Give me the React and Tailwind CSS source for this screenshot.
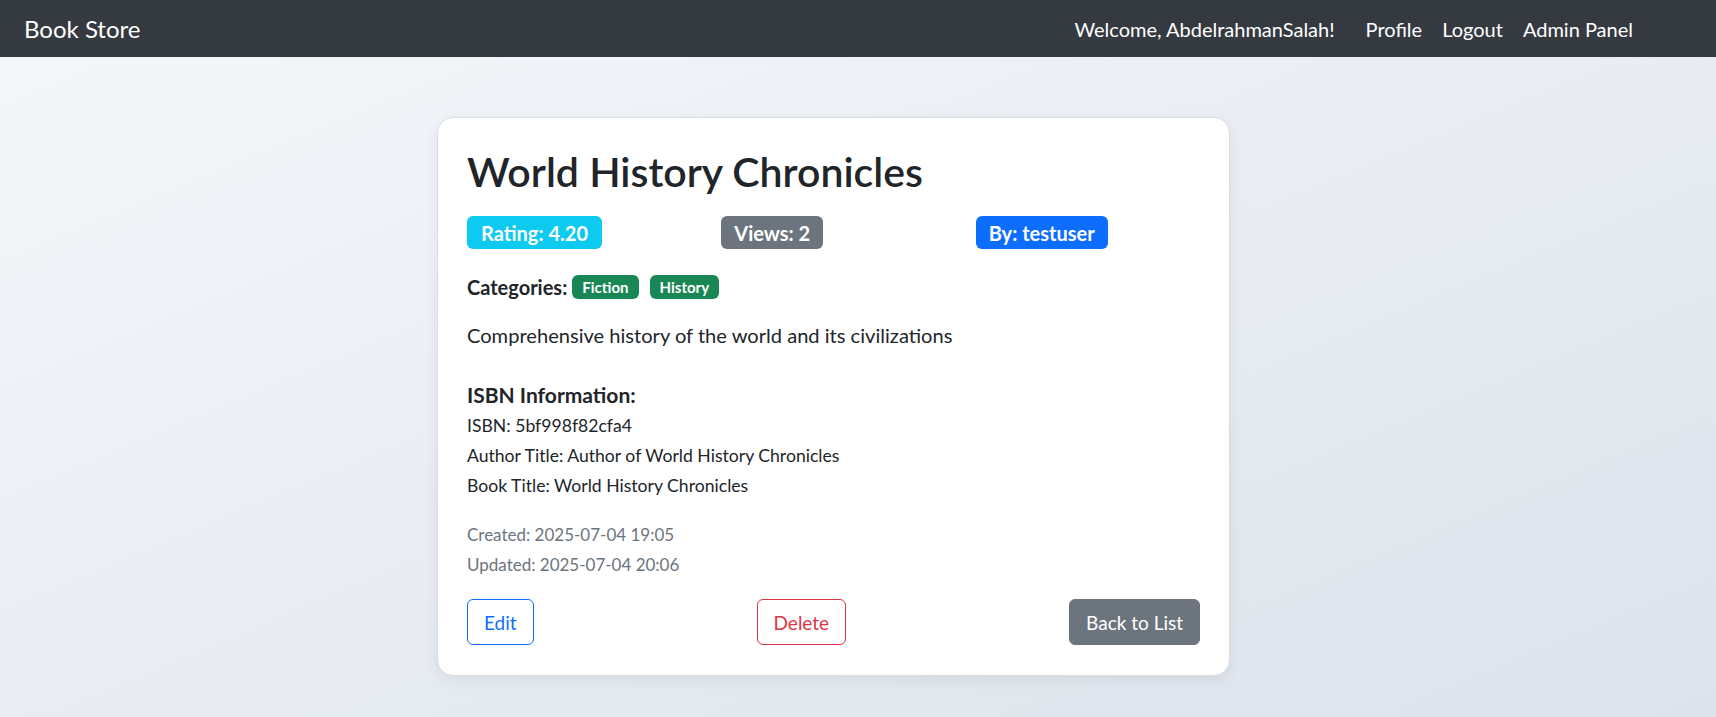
// Book detail page: top navbar + single card with book info
const font = { fontFamily: '"Segoe UI", Lato, "Noto Sans", sans-serif' };

function NavBar() {
  return (
    <nav className="h-[57px] bg-[#343a40] flex items-center pl-[24px] pr-[83px] text-white">
      <a className="text-[24px] leading-none">Book Store</a>
      <div className="ml-auto flex items-center text-[20px] leading-none">
        <span className="mr-[31px]">Welcome, AbdelrahmanSalah!</span>
        <div className="flex items-center gap-[20px]">
          <a>Profile</a>
          <a>Logout</a>
          <a>Admin Panel</a>
        </div>
      </div>
    </nav>
  );
}

function Badge({ color, children }) {
  return (
    <span className={`inline-flex items-center h-[33px] px-[13px] rounded-[6px] text-white font-bold text-[20px] leading-none ${color}`}>
      {children}
    </span>
  );
}

function Category({ children }) {
  return (
    <span className="inline-flex items-center h-[24px] px-[10px] rounded-[6px] bg-[#198754] text-white font-bold text-[15px] leading-none">
      {children}
    </span>
  );
}

export default function App() {
  return (
    <div style={font} className="min-h-screen bg-linear-to-br from-[#f5f7fa] to-[#dde3ec] text-[#212529]">
      <NavBar />

      <div className="pt-[60px] pb-[40px]">
        <div className="ml-[437px] w-[793px] bg-white border border-[#d9dde2] rounded-[16px] shadow-[0_4px_14px_rgba(0,0,0,0.07)] px-[29px] pt-[28px] pb-[30px]">
          <h1 className="text-[41px] leading-[52px] font-semibold">World History Chronicles</h1>

          {/* 3 badges in columns */}
          <div className="mt-[18px] grid grid-cols-3 gap-x-[30px]">
            <div><Badge color="bg-[#0dcaf0] px-[14px]">Rating: 4.20</Badge></div>
            <div><Badge color="bg-[#6c757d]">Views: 2</Badge></div>
            <div><Badge color="bg-[#0d6efd]">By: testuser</Badge></div>
          </div>

          <div className="mt-[26px] flex items-center h-[24px]">
            <span className="font-bold text-[20px] mr-[5px]">Categories:</span>
            <div className="flex items-center gap-[11px]">
              <Category>Fiction</Category>
              <Category>History</Category>
            </div>
          </div>

          <p className="mt-[20px] text-[20.1px] leading-[32px]">
            Comprehensive history of the world and its civilizations
          </p>

          <h6 className="mt-[32px] text-[21px] leading-[24px] font-bold">ISBN Information:</h6>
          <div className="mt-[4px] text-[17.6px] leading-[30px]">
            <p>ISBN: 5bf998f82cfa4</p>
            <p>Author Title: Author of World History Chronicles</p>
            <p>Book Title: World History Chronicles</p>
          </div>

          <div className="mt-[19px] text-[17px] leading-[30px] text-[#6c757d]">
            <p>Created: 2025-07-04 19:05</p>
            <p>Updated: 2025-07-04 20:06</p>
          </div>

          <div className="mt-[19px] flex items-center justify-between">
            <button className="h-[46px] px-[16px] border border-[#0d6efd] text-[#0d6efd] rounded-[6px] text-[19px] leading-none bg-white">
              Edit
            </button>
            <button className="h-[46px] px-[16px] border border-[#dc3545] text-[#dc3545] rounded-[6px] text-[19px] leading-none bg-white">
              Delete
            </button>
            <button className="h-[46px] px-[16px] border border-[#6c757d] bg-[#6c757d] text-white rounded-[6px] text-[19px] leading-none">
              Back to List
            </button>
          </div>
        </div>
      </div>
    </div>
  );
}
